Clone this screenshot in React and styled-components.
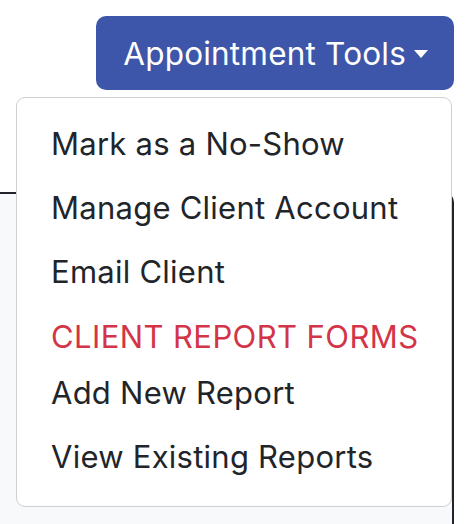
import React from 'react'
import styled, { createGlobalStyle } from 'styled-components'

const GlobalStyle = createGlobalStyle`
  html, body {
    margin: 0;
    padding: 0;
    background: #fff;
    overflow: hidden;
  }
  body {
    font-family: Inter, "Noto Sans", "Liberation Sans", sans-serif;
    color: #212529;
  }
`

const Page = styled.div`
  position: relative;
  width: 470px;
  height: 524px;
  overflow: hidden;
`

const Toolbar = styled.div`
  display: flex;
  justify-content: flex-end;
  padding: 16px 16px 0 0;
`

const ToolButton = styled.button`
  display: flex;
  align-items: center;
  height: 74px;
  padding: 0 26px 0 27px;
  border: none;
  border-radius: 10px;
  background: #3d56a9;
  color: #fff;
  font-family: inherit;
  font-size: 31.5px;
  letter-spacing: 0.2px;
  cursor: pointer;
`

const Caret = styled.span`
  display: inline-block;
  margin-left: 8px;
  margin-top: 2px;
  border-top: 8px solid #fff;
  border-left: 7.5px solid transparent;
  border-right: 7.5px solid transparent;
`

const Panel = styled.div`
  margin-top: 102px;
  margin-right: 16px;
  height: 400px;
  background: #f8f9fa;
  border-top: 2px solid #212529;
  border-right: 2px solid #212529;
  border-top-right-radius: 10px;
`

const Menu = styled.div`
  position: absolute;
  top: 97px;
  left: 16px;
  width: 436px;
  box-sizing: border-box;
  padding: 14px 0 17px;
  background: #fff;
  border: 1px solid #cfd0d2;
  border-radius: 9px;
`

const Item = styled.div`
  padding: 9px 34px;
  font-size: 31px;
  line-height: 46px;
  letter-spacing: 0.25px;
  color: #212529;
  white-space: nowrap;
`

const Header = styled(Item)`
  padding-top: 10px;
  padding-bottom: 1px;
  letter-spacing: 0.4px;
  color: #d33448;
`

const items = [
  { label: 'Mark as a No-Show' },
  { label: 'Manage Client Account' },
  { label: 'Email Client' },
  { label: 'CLIENT REPORT FORMS', header: true },
  { label: 'Add New Report' },
  { label: 'View Existing Reports' },
]

export default function App() {
  return (
    <Page>
      <GlobalStyle />
      <Toolbar>
        <ToolButton>
          Appointment Tools
          <Caret />
        </ToolButton>
      </Toolbar>
      <Panel />
      <Menu>
        {items.map((it) =>
          it.header ? (
            <Header key={it.label}>{it.label}</Header>
          ) : (
            <Item key={it.label}>{it.label}</Item>
          )
        )}
      </Menu>
    </Page>
  )
}
